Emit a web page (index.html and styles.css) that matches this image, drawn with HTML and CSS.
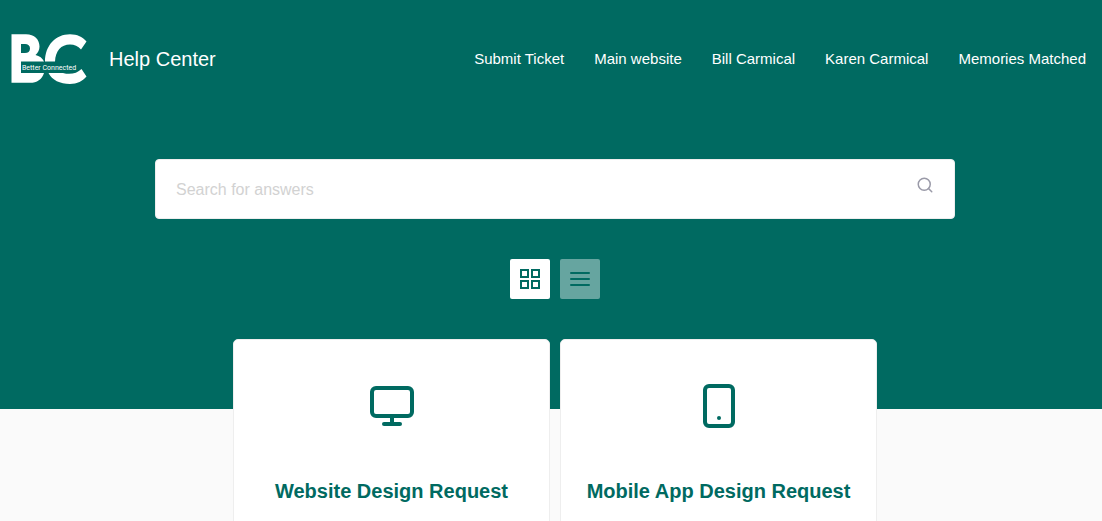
FILE: index.html
```html
<!DOCTYPE html>
<html lang="en">
<head>
  <meta charset="UTF-8">
  <meta name="viewport" content="width=device-width, initial-scale=1">
  <title>Help Center</title>
  <link rel="stylesheet" href="styles.css">
</head>
<body>

  <div class="hero">
    <header class="header">
      <a class="brand" href="#">
        <svg class="logo" viewBox="0 0 78 52" role="img" aria-label="Better Connected">
          <!-- B -->
          <path fill="#fff" fill-rule="evenodd" d="M1.5 1.2H16C24.500 1.2 29.500 6.500 29.500 13.500C29.500 17 28 20 25.500 22C29.500 23 32.500 25 34 28.500H11V40H34C32 46.500 27 49.800 20 49.800H1.500ZM11 11V20H15C18 20 20 18.500 20 15.500C20 12.500 18 11 15 11Z"/>
          <!-- C -->
          <path fill="#fff" d="M35 28.500C35 12 46 1.200 60 1.200C67 1.200 73 4 76.500 8.500L71 16.500C68 13 64.500 11.500 60 11.500C51 11.500 45.500 18 45 28.500ZM38.500 40H53C60 42 67 40.500 71.500 36L76.500 43.500C73 48 67 51 60 51C50 51 42 47 38.500 40Z"/>
          <text class="logo-text" x="12" y="37">Better Connected</text>
        </svg>
        <span class="brand-name">Help Center</span>
      </a>
      <nav class="nav">
        <a href="#">Submit Ticket</a>
        <a href="#">Main website</a>
        <a href="#">Bill Carmical</a>
        <a href="#">Karen Carmical</a>
        <a href="#">Memories Matched</a>
      </nav>
    </header>

    <div class="hero-body">
      <form class="search">
        <input class="search-input" type="text" placeholder="Search for answers" aria-label="Search for answers">
        <button class="search-btn" type="submit" aria-label="Search">
          <svg class="icon" width="18" height="18" viewBox="0 0 24 24">
            <circle cx="11" cy="11" r="8"/>
            <line x1="21" y1="21" x2="16.65" y2="16.65"/>
          </svg>
        </button>
      </form>

      <div class="views">
        <button class="view-btn active" type="button" aria-label="Grid view">
          <svg class="icon" width="24" height="24" viewBox="0 0 24 24">
            <rect x="3" y="3" width="7" height="7"/>
            <rect x="14" y="3" width="7" height="7"/>
            <rect x="14" y="14" width="7" height="7"/>
            <rect x="3" y="14" width="7" height="7"/>
          </svg>
        </button>
        <button class="view-btn" type="button" aria-label="List view">
          <svg class="icon" width="24" height="24" viewBox="0 0 24 24">
            <line x1="3" y1="6" x2="21" y2="6"/>
            <line x1="3" y1="12" x2="21" y2="12"/>
            <line x1="3" y1="18" x2="21" y2="18"/>
          </svg>
        </button>
      </div>
    </div>
  </div>

  <main class="cards">
    <a class="card" href="#">
      <svg class="icon" width="48" height="48" viewBox="0 0 24 24">
        <rect x="2" y="3" width="20" height="14" rx="2" ry="2"/>
        <line x1="8" y1="21" x2="16" y2="21"/>
        <line x1="12" y1="17" x2="12" y2="21"/>
      </svg>
      <h2 class="card-title">Website Design Request</h2>
    </a>
    <a class="card" href="#">
      <svg class="icon" width="48" height="48" viewBox="0 0 24 24">
        <rect x="5" y="2" width="14" height="20" rx="2" ry="2"/>
        <line x1="12" y1="18" x2="12.01" y2="18"/>
      </svg>
      <h2 class="card-title">Mobile App Design Request</h2>
    </a>
  </main>

</body>
</html>
```
FILE: styles.css
```css
* {
  box-sizing: border-box;
}

body {
  margin: 0;
  background: #fafafa;
  font-family: "Liberation Sans", Arial, sans-serif;
  overflow-x: hidden;
}

a {
  text-decoration: none;
}

.hero {
  background: #006a61;
  padding-bottom: 110px;
}

.header {
  display: flex;
  align-items: center;
  justify-content: space-between;
  padding: 33px 16px 33px 10px;
}

.brand {
  display: flex;
  align-items: center;
  gap: 21px;
  color: #fff;
}

.logo {
  width: 78px;
  height: 52px;
}

.logo-text {
  fill: #fff;
  font-family: Roboto, sans-serif;
  font-size: 7px;
}

.brand-name {
  font-size: 20px;
}

.nav {
  display: flex;
  gap: 30px;
}

.nav a {
  color: #fff;
  font-size: 15px;
  line-height: 20px;
}

.hero-body {
  display: flex;
  flex-direction: column;
  align-items: center;
  gap: 40px;
  padding: 41px 0 0 8px;
}

.search {
  display: flex;
  align-items: flex-start;
  width: 100%;
  max-width: 800px;
  height: 60px;
  background: #fff;
  border: 1px solid #eee;
  border-radius: 4px;
}

.search-input {
  flex: 1;
  height: 100%;
  padding: 2px 20px 0;
  border: none;
  background: none;
  font-family: inherit;
  font-size: 16px;
  outline: none;
}

.search-input::placeholder {
  color: #d2d2d2;
}

.search-btn {
  display: flex;
  padding: 16px 20px;
  border: none;
  background: none;
  color: #9a9aa8;
  cursor: pointer;
}

.icon {
  fill: none;
  stroke: currentColor;
  stroke-width: 2;
  stroke-linecap: round;
  stroke-linejoin: round;
}

.views {
  display: flex;
  gap: 10px;
}

.view-btn {
  display: flex;
  align-items: center;
  justify-content: center;
  width: 40px;
  height: 40px;
  padding: 0;
  border: none;
  border-radius: 2px;
  background: rgba(255, 255, 255, 0.4);
  color: #006a61;
  cursor: pointer;
}

.view-btn.active {
  background: #fff;
}

.view-btn .icon {
  stroke-linejoin: miter;
}

.cards {
  display: flex;
  justify-content: center;
  gap: 10px;
  margin-top: -70px;
  padding-left: 8px;
}

.card {
  display: flex;
  flex-direction: column;
  align-items: center;
  width: 317px;
  padding: 42px 20px;
  background: #fff;
  border: 1px solid #eee;
  border-radius: 5px;
  color: #006a61;
}

.card-title {
  margin: 48px 0 0;
  font-size: 20px;
  line-height: 26px;
}
```
